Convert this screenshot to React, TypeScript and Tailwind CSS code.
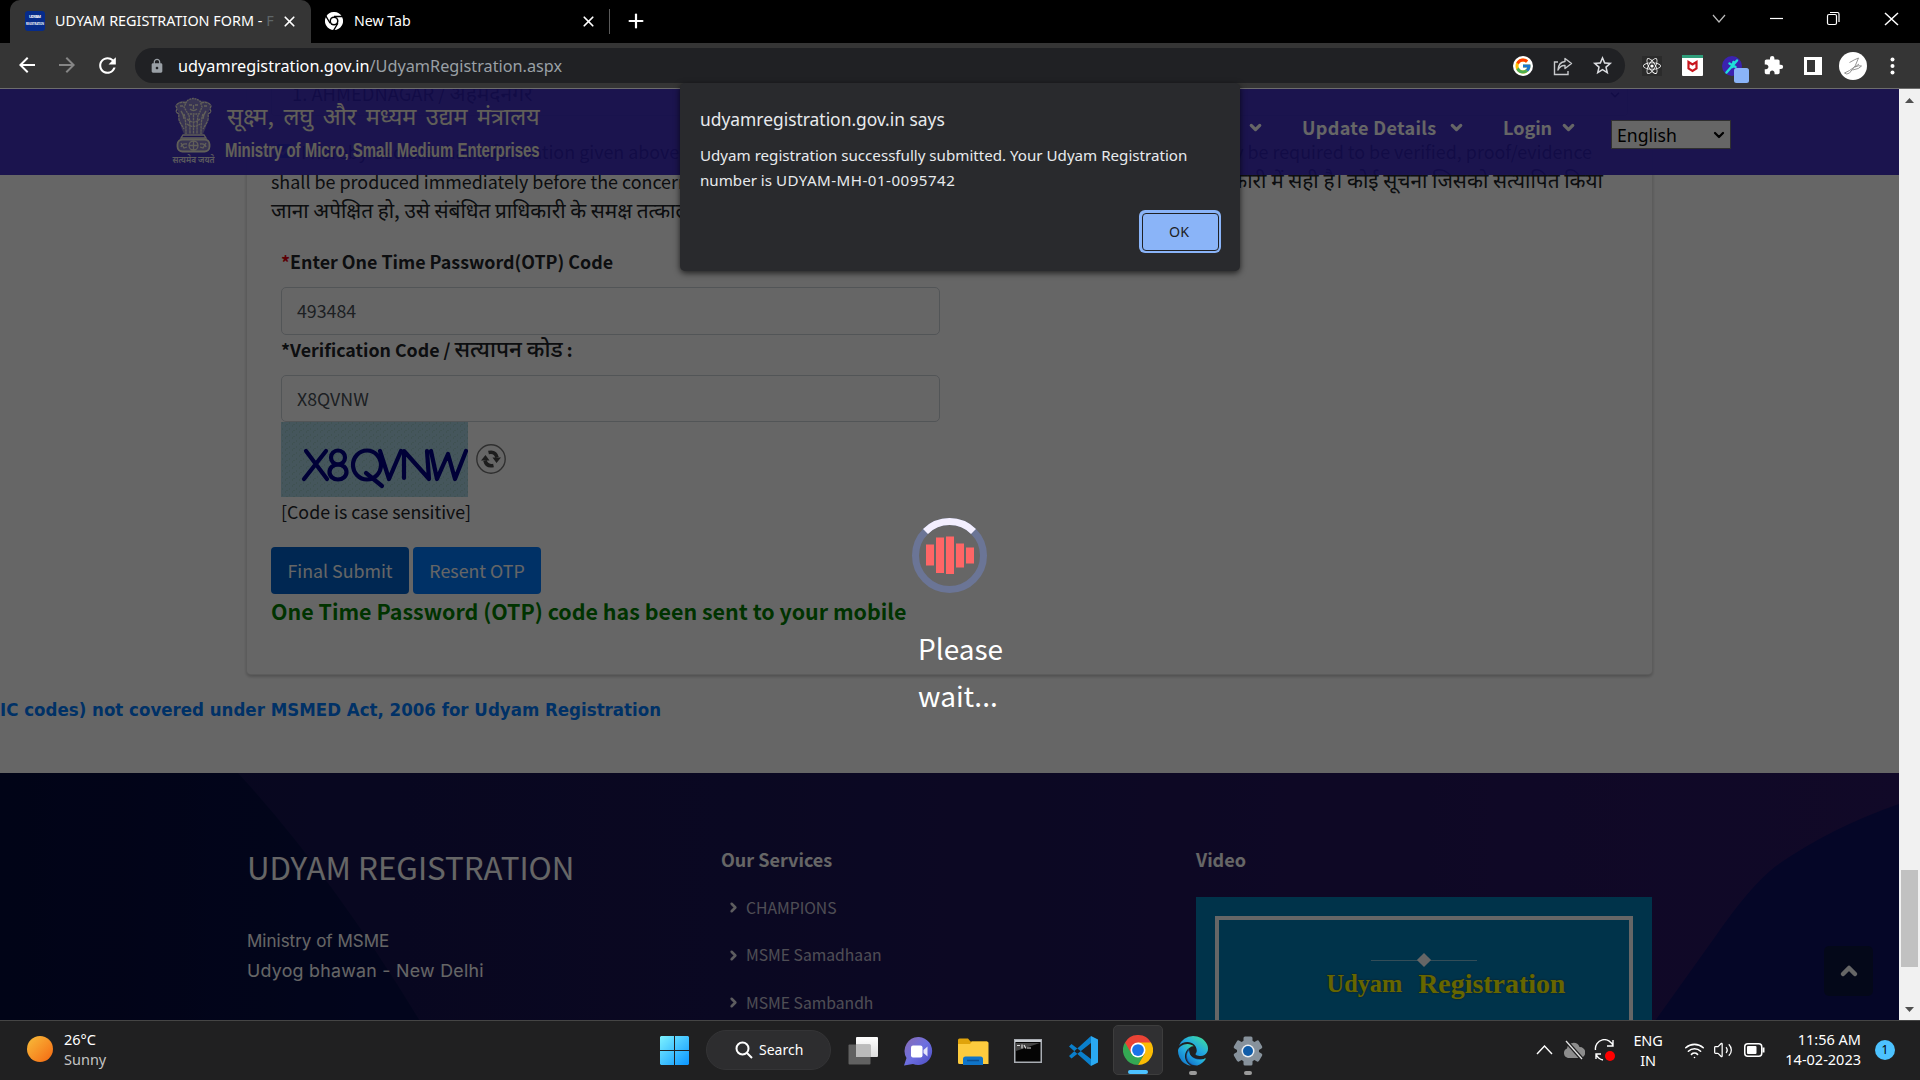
import React, { type ReactNode } from "react";
import { FcGoogle } from "react-icons/fc";
import { FaReact } from "react-icons/fa";
import { BsBrowserEdge } from "react-icons/bs";
import { MdArrowBack, MdArrowForward, MdExtension, MdLock, MdRefresh, MdStarBorder } from "react-icons/md";
import { ChevronDown, ChevronRight, ChevronUp, Plus, Volume2, Wifi, X } from "lucide-react";

function ChromeMark({ size, mono = false }: { size: number; mono?: boolean }) {
  const c = mono ? ["#fff", "#fff", "#fff", "#000", "#fff"] : ["#ea4335", "#34a853", "#fbbc04", "#fff", "#1a73e8"];
  return (
    <svg width={size} height={size} viewBox="0 0 48 48">
      <path d="M24 24 3.2 12A24 24 0 0 1 44.8 12Z" fill={c[0]} />
      <path d="M24 24 3.2 12A24 24 0 0 0 24 48L34.4 30Z" fill={c[1]} />
      <path d="M24 12H44.8A24 24 0 0 1 24 48L34.4 30Z" fill={c[2]} />
      <path d="M3.2 12 13.6 30 24 12H44.8L24 12Z" fill={c[0]} />
      {mono && <path d="M24 12H46M34.4 30 23 49M13.6 30 2.5 11" stroke="#000" strokeWidth="3.5" />}
      <circle cx="24" cy="24" r="12" fill={c[3]} />
      <circle cx="24" cy="24" r={mono ? 8 : 9.4} fill={c[4]} />
    </svg>
  );
}

function TabStrip() {
  return (
    <div className="flex h-[43px] shrink-0 items-start bg-black text-white">
      <div className="ml-[10px] flex h-[42px] w-[301px] items-center rounded-t-[10px] bg-[#353535] pl-[15px] shadow-[0_1px_0_#353535]">
        <svg width="20" height="20" viewBox="0 0 20 20" className="font-bold">
          <rect width="20" height="20" rx="3" fill="#062b8a" />
          <text x="4" y="7" fontSize="4" textLength="12" fill="#fff">UDYAM</text>
          <text x="1" y="14" fontSize="3.500" textLength="18" lengthAdjust="spacingAndGlyphs" fill="#fff">REGISTRATION</text>
        </svg>
        <div className="ml-[10px] w-[220px] overflow-hidden text-[14.4px] leading-[20px] whitespace-nowrap">
          UDYAM REGISTRATION FORM - <span className="text-[#5f6668]">F</span>
        </div>
        <X className="ml-[6px]" size={17} strokeWidth={2.4} />
      </div>
      <div className="flex h-[42px] w-[298px] items-center pl-[14px]">
        <ChromeMark size={18} mono />
        <div className="ml-[11px] flex-1 text-[14.2px] leading-[20px]">New Tab</div>
        <X className="mr-[12px]" size={17} strokeWidth={2.4} />
      </div>
      <div className="mt-[9px] h-[25px] w-px bg-[#5a5a5a]" />
      <Plus className="mt-[10px] ml-[15px]" size={22} strokeWidth={2.4} />
      <div className="ml-auto flex h-[38px] items-center">
        <svg width="200" height="38" viewBox="0 0 200 38" fill="none" stroke="#fff" strokeWidth="1.2" className="mr-[8px]">
          <path d="m1 15 6 7 6-7" stroke="#bbb" />
          <path d="M58 18.5h13" />
          <rect x="115.500" y="14.500" width="9" height="10" rx="1.500" />
          <path d="M118 12.500h7.500q1.500 0 1.500 1.500v8" />
          <path d="m173 13 13 12M186 13l-13 12" strokeWidth="1.500" />
        </svg>
      </div>
    </div>
  );
}

function Toolbar() {
  return (
    <div className="flex h-[46px] shrink-0 items-center border-b border-[#6d6d6d] bg-[#353535] text-white">
      <MdArrowBack className="ml-[15px] -mt-px" size={24} />
      <MdArrowForward className="ml-[16px] -mt-px text-[#868686]" size={24} />
      <MdRefresh className="ml-[16px] -mt-px" size={25} />
      <div className="ml-[15px] flex h-[35px] w-[1490px] items-center rounded-full bg-[#202124] pl-[14px]">
        <MdLock className="text-[#9aa0a6]" size={16} />
        <div className="ml-[13px] text-[16.25px] leading-[24px] whitespace-nowrap">
          udyamregistration.gov.in<span className="text-[#9aa0a6]">/UdyamRegistration.aspx</span>
        </div>
        <div className="ml-auto flex items-center pr-[11px]">
          <span className="flex h-5 w-5 items-center justify-center rounded-full bg-white"><FcGoogle size={18} /></span>
          <svg className="ml-[20px]" width="20" height="20" viewBox="0 0 20 20" fill="none" stroke="#c7c9cc" strokeWidth="1.400">
            <path d="M5 6H1.500v12.500h13.500V15" />
            <path d="M12 2.500 18.500 7.500 12 12.500V9.500Q7.500 9 5 14 5.500 6 12 5.500Z" strokeLinejoin="round" />
          </svg>
          <MdStarBorder className="ml-[18px] text-[#dadce0]" size={23} />
        </div>
      </div>
      <div className="ml-[17px] flex items-center">
        <span className="flex h-5 w-5 items-center justify-center bg-[#2b2b2b]"><FaReact size={18} /></span>
        <svg className="ml-[20px]" width="21" height="21" viewBox="0 0 21 21">
          <rect width="21" height="21" rx="1" fill="#fff" />
          <rect width="21" height="3" fill="#2f9e7b" />
          <path d="M6.500 7v6.500l4 2.500 4-2.500V7l-4 2.500Z" fill="none" stroke="#c8161d" strokeWidth="2.200" />
        </svg>
        <svg className="mt-[7px] ml-[18px]" width="29" height="29" viewBox="0 0 29 29">
          <circle cx="11" cy="11" r="10" fill="#3b22b0" />
          <path d="M5.500 17.500 16 5.500M8.500 8.500l6 3.500M12.500 7l-1 5" stroke="#1fe0d8" strokeWidth="2.500" strokeLinecap="round" />
          <rect x="13" y="13" width="15" height="15" rx="2.500" fill="#8ab4f8" />
        </svg>
        <MdExtension className="ml-[13px]" size={21} />
        <div className="ml-[20px] flex h-[18px] w-[18px] justify-end border-[3px] border-white"><div className="w-[4px] bg-white" /></div>
        <svg className="ml-[17px]" width="28" height="28" viewBox="0 0 28 28">
          <circle cx="14" cy="14" r="14" fill="#fff" />
          <path d="M10.500 10.500q5-3 9-4.500-2 8-9 15-3 2-5 0 5-2 10-6 5-2 7-1-2 3-9 4M16 15l4-3" fill="none" stroke="#888" strokeWidth=".9" />
        </svg>
        <svg className="ml-[23px]" width="5" height="18" viewBox="0 0 5 18" fill="#fff">
          <circle cx="2.500" cy="2.500" r="2" /><circle cx="2.500" cy="9" r="2" /><circle cx="2.500" cy="15.500" r="2" />
        </svg>
      </div>
    </div>
  );
}

function Emblem() {
  return (
    <svg width="43" height="68" viewBox="0 0 43 68">
      <g fill="none" stroke="#f2eedd" strokeWidth="1.300">
        <path d="M15 4q6-5 13 0l2 6-3 7H16l-4-7Z" strokeDasharray="2 .7" />
        <path d="M17 8h3M23 8h3M18 12q3.500 3 7 0M21.500 8v4" />
        <path d="M14 6Q6 4 4 9l1 3-1 3 3 2q-1 6 2 10l3 5M29 6q8-2 10 3l-1 3 1 3-3 2q1 6-2 10l-3 5" strokeDasharray="3 .6" />
        <path d="M8 9h3M32 9h3M9 14q3 4 3 8M34 14q-3 4-3 8" />
        <path d="M12 17q2 5 2 20M31 17q-2 5-2 20M17 18q1 8 1 19M26 18q-1 8-1 19M21.500 18v19M15 22q6.500 6 13 0M15 27q6.500 5 13 0" strokeDasharray="2.500 .6" />
        <path d="M11 38h21l2 3H9Z" />
        <rect x="5.500" y="42.500" width="32" height="12" rx="5" strokeWidth="1.800" />
        <circle cx="21.500" cy="48.500" r="4.500" />
        <path d="M21.500 44v9M17 48.500h9M9 50q1-4 6-3M9 46l3 5 3-1M34 50q-1-4-6-3M34 46l-3 5-3-1" />
      </g>
      <g fill="#f2eedd" opacity=".42">
        <path d="M15 4q6-5 13 0 9-1 11 5l-3 8q0 10-5 20H12Q7 27 7 17L4 9q2-6 11-5Z" />
        <rect x="5" y="42" width="33" height="13" rx="5" />
      </g>
      <text x="0.500" y="66" fontSize="9.500" textLength="42" lengthAdjust="spacingAndGlyphs" fill="#e4e0e8" className="font-['Noto_Sans_Devanagari','Noto_Sans',sans-serif] font-semibold">सत्यमेव जयते</text>
    </svg>
  );
}

function SiteHeader() {
  return (
    <div className="absolute inset-x-0 top-0 flex h-[86px] bg-[rgba(49,30,190,0.9)] text-white">
      <div className="mt-[8px] ml-[172px]"><Emblem /></div>
      <div className="ml-[12px] w-[400px] whitespace-nowrap">
        <div className="mt-[11px] h-[35px] text-[23.5px] leading-[30px] [word-spacing:4.2px] text-[#f2eedd]">सूक्ष्म, लघु और मध्यम उद्यम मंत्रालय</div>
        <div className="-ml-[2px] origin-left scale-x-[0.747] font-['Liberation_Sans',sans-serif] text-[20px] leading-[30px] font-bold text-[#f2eedd]">
          Ministry of Micro, Small Medium Enterprises
        </div>
      </div>
      <div className="ml-auto flex h-[77px] items-center pr-[168px] font-['Noto_Sans_CJK_SC','Noto_Sans',sans-serif] text-[18px] font-bold">
        <ChevronDown size={17} strokeWidth={4.5} className="mr-[38px]" />
        <span className="w-[146px] tracking-[0.35px]">Update Details</span>
        <ChevronDown size={17} strokeWidth={4.5} className="mr-[38px]" />
        <span className="w-[57px]">Login</span>
        <ChevronDown size={17} strokeWidth={4.5} className="mr-[34px]" />
        <div className="mt-[14px] flex h-[29px] w-[120px] items-center border border-[#767676] bg-white pt-px pl-[5px] font-['Noto_Sans',sans-serif] text-[17.6px] font-normal text-black">
          English
          <ChevronDown size={16} strokeWidth={3.4} className="mr-[3px] ml-auto" />
        </div>
      </div>
    </div>
  );
}

function Field({ value, className }: { value: string; className: string }) {
  return <div className={`flex w-[659px] items-center rounded-[5px] border border-[#ced4da] pb-[2px] pl-[15px] text-[17.8px] leading-[28px] text-[#495057] ${className}`}>{value}</div>;
}

function Captcha() {
  return (
    <svg width="187" height="75" viewBox="0 0 187 75">
      <defs>
        <pattern id="noise" width="7" height="6" patternUnits="userSpaceOnUse">
          <rect width="7" height="6" fill="#add8e6" />
          <path d="M1 1h1M4 4h1M6 2v1" stroke="#94c4b8" />
        </pattern>
      </defs>
      <rect width="187" height="75" fill="url(#noise)" />
      <g fill="none" stroke="#00008b" strokeWidth="4.200" strokeLinejoin="round" strokeLinecap="round">
        <path d="M25 29 46 57M45 29 23 57" />
        <ellipse cx="57" cy="35.500" rx="7" ry="7" /><ellipse cx="57" cy="50" rx="8.500" ry="7.500" />
        <ellipse cx="86" cy="43" rx="14" ry="14.500" /><path d="m85 51 16 13" />
        <path d="M99 29 108 57 120 29M123 56 123 29 148 57 146 29M150 29 156 57 167 32 174 57 185 29" />
      </g>
    </svg>
  );
}

function RefreshButton() {
  return (
    <svg className="mt-[22px] ml-[8px]" width="30" height="30" viewBox="0 0 30 30">
      <circle cx="15" cy="15" r="14.2" fill="none" stroke="#777" strokeWidth="1.4" />
      <g fill="none" stroke="#4a4a4a" strokeWidth="3.6">
        <path d="M12.500 8.600Q19.500 7 21 13.500" /><path d="M17.500 21.400Q10.500 23 9 16.500" />
      </g>
      <path d="M16.500 13.500h8.500L20.500 19ZM5 16.500h8.500L9.500 11Z" fill="#4a4a4a" />
    </svg>
  );
}

function FormCard() {
  return (
    <div className="ml-[246px] h-[586px] w-[1407px] rounded-b-[5px] border border-t-0 border-black/10 pl-[24px] text-[18px] text-[#212529] shadow-[0_2px_3px_rgba(0,0,0,0.2)]">
      <div className="flex h-[27px] w-[1357px] justify-between rounded-b-[4px] border border-t-0 border-[#ced4da] pr-[5px] pl-[20px] text-[18.4px] leading-[6px]">
        <span>1. AHMEDNAGAR / <span className="text-[21px]">अहमदनगर</span></span>
        <ChevronDown size={14} strokeWidth={3} className="-mt-px" />
      </div>
      <div className="mt-[20px] w-[1332px] text-[17.9px] leading-[30px] whitespace-nowrap">
        <div className="flex justify-between pr-[11px]">
          <span className="flex items-center">
            <span className="mr-[10px] ml-[6px] flex h-[14px] w-[14px] items-center rounded-[2px] bg-[#0075ff]">
              <svg width="14" height="14" viewBox="0 0 14 14"><path d="m3 7 3 3 5-6" fill="none" stroke="#fff" strokeWidth="2" /></svg>
            </span>
            <span>I hereby declare that information given above</span>
          </span>
          <span>any information that may be required to be verified, proof/evidence</span>
        </div>
        <div className="flex h-[30px] justify-between">
          <span>shall be produced immediately before the concerned</span>
          <span className="-mt-[2px] text-[20.8px]">जानकारी में सही है। कोई सूचना जिसको सत्यापित किया</span>
        </div>
        <div className="h-[30px] text-[20.75px] leading-[26px]">जाना अपेक्षित हो, उसे संबंधित प्राधिकारी के समक्ष तत्काल</div>
      </div>
      <div className="mt-[20px] pl-[10px]">
        <div className="text-[17.85px] leading-[30px] font-bold"><span className="text-red-600">*</span>Enter One Time Password(OTP) Code</div>
        <Field value="493484" className="mt-[11px] h-[48px]" />
        <div className="h-[28px] text-[17.8px] leading-[28px] font-bold">*Verification Code / <span className="text-[22.400px] leading-[20px] font-medium">सत्यापन कोड</span> :</div>
        <Field value="X8QVNW" className="mt-[12px] h-[47px]" />
        <div className="flex">
          <Captcha />
          <RefreshButton />
        </div>
        <div className="text-[17.8px] leading-[28px]">[Code is case sensitive]</div>
      </div>
      <div className="mt-[22px] flex gap-[4px] text-[17.8px] text-white">
        <div className="flex h-[47px] w-[138px] items-center justify-center rounded-[4px] bg-[#0062cc]">Final Submit</div>
        <div className="flex h-[47px] w-[128px] items-center justify-center rounded-[4px] bg-[#007bff]">Resent OTP</div>
      </div>
      <div className="text-[21.43px] leading-[33px] font-bold text-[#008000]">One Time Password (OTP) code has been sent to your mobile</div>
    </div>
  );
}

function FooterLink({ children }: { children: ReactNode }) {
  return <div className="flex h-[47.4px] items-center text-[15.7px] text-white/75"><ChevronRight size={15} strokeWidth={4} className="mr-[5px] ml-[5px] text-white/90" />{children}</div>;
}

function Footer() {
  return (
    <div className="relative mt-[48px] h-[248px] overflow-hidden text-white">
      <svg className="absolute inset-0" width="1899" height="248" viewBox="0 0 1899 248" preserveAspectRatio="none">
        <defs>
          <linearGradient id="f1"><stop offset="0" stopColor="#040b3a" /><stop offset="1" stopColor="#070e48" /></linearGradient>
          <linearGradient id="f2"><stop offset="0" stopColor="#10124c" /><stop offset="1" stopColor="#2c1764" /></linearGradient>
        </defs>
        <rect width="1899" height="248" fill="url(#f2)" />
        <path d="M0 0H238Q330 100 420 248H0Z" fill="url(#f1)" />
        <path d="M1655 248 1715 164Q1750 113 1776 93 1830 55 1899 31V248Z" fill="#0d1062" />
      </svg>
      <div className="relative flex pl-[247px]">
        <div className="w-[474px] pt-[74px] font-['Inter',sans-serif] text-[17px] leading-[30px]">
          <div className="mb-[39px] font-['Noto_Sans_CJK_SC',sans-serif] text-[31.3px] leading-[40px]">UDYAM REGISTRATION</div>
          <div>Ministry of MSME</div>
          <div className="text-[17.8px] tracking-[0.27px]">Udyog bhawan - New Delhi</div>
        </div>
        <div className="w-[475px] pt-[71px]">
          <div className="mb-[10px] text-[18px] leading-[30px] font-bold">Our Services</div>
          <FooterLink>CHAMPIONS</FooterLink>
          <FooterLink>MSME Samadhaan</FooterLink>
          <FooterLink>MSME Sambandh</FooterLink>
        </div>
        <div className="pt-[71px]">
          <div className="mb-[23px] text-[18px] leading-[30px] font-bold">Video</div>
          <div className="h-[150px] w-[456px] bg-[#0080ba] px-[19px] pt-[19px]">
            <div className="flex h-[150px] flex-col items-center border-[4.500px] border-white">
              <div className="mt-[35px] flex items-center"><div className="h-px w-[48px] bg-white/50" /><div className="h-[10px] w-[10px] rotate-45 bg-white" /><div className="h-px w-[48px] bg-white/50" /></div>
              <div className="mt-[2px] flex gap-[16px] pl-[44px] font-['Liberation_Serif',serif] text-[24.300px] leading-[34px] font-bold text-[#ffff00] [text-shadow:0_0_2px_#333]">
                <span>Udyam</span><span className="text-[27.9px]">Registration</span>
              </div>
            </div>
          </div>
        </div>
      </div>
      <div className="absolute top-[173px] left-[1824px] flex h-[50px] w-[49px] items-center justify-center rounded-[5px] bg-[#0a1440]"><ChevronUp size={24} strokeWidth={4.5} /></div>
    </div>
  );
}

function Loader() {
  return (
    <div className="absolute inset-0 bg-black/60 text-white">
      <div className="ml-[911px] pt-[428px]">
        <svg width="77" height="77" viewBox="-38.500 -38.500 77 77">
          <circle r="34" fill="none" stroke="#6b7596" strokeWidth="7" />
          <path d="M-24-24A34 34 0 0 1 24-24" fill="none" stroke="#f3efff" strokeWidth="7" />
          <path d="M-23.500-11h8v21h-8zM-13.500-18h8v35.500h-8zM-3.500-19h8v37.500h-8zM6.500-12h8v24h-8zM16.500-8h8v16h-8z" fill="#ff6666" />
        </svg>
        <div className="mt-[31px] ml-[7px] w-[90px] text-[28px] leading-[47px]"><div>Please</div><div>wait...</div></div>
      </div>
    </div>
  );
}

function Scrollbar() {
  return (
    <div className="flex w-[21px] flex-col items-center bg-[#f1f1f1]">
      <svg className="mt-[9px]" width="9" height="5"><path d="M0 5 4.500 0 9 5z" fill="#505050" /></svg>
      <div className="mt-[767px] h-[97px] w-[17px] bg-[#c1c1c1]" />
      <svg className="mt-[40px]" width="9" height="5"><path d="M0 0 4.500 5 9 0z" fill="#505050" /></svg>
    </div>
  );
}

function AlertDialog() {
  return (
    <div className="absolute top-[83px] left-[680px] h-[188px] w-[560px] rounded-[5px] bg-[#292a2d] px-[20px] pt-[23px] text-[#e8eaed] shadow-[0_2px_6px_rgba(0,0,0,0.7)]">
      <div className="text-[17.4px] leading-[26px]">udyamregistration.gov.in says</div>
      <div className="mt-[11px] text-[15.13px] leading-[25px] whitespace-nowrap">
        Udyam registration successfully submitted. Your Udyam Registration
        <div>number is <span className="tracking-[0.47px]">UDYAM-MH-01-0095742</span></div>
      </div>
      <div className="mt-[17px] ml-[439px] h-[43px] w-[82px] rounded-[6px] bg-[#8ab4f8] p-[2.500px]">
        <div className="flex h-full items-center justify-center rounded-[4px] border-[1.500px] border-[#202124] pr-[2px] text-[14.2px] text-[#202124]">OK</div>
      </div>
    </div>
  );
}

function TaskCell({ children, active, mark }: { children: ReactNode; active?: boolean; mark?: boolean }) {
  return (
    <div className="flex h-[59px] w-[54.95px] items-start justify-center pt-[4px]">
      <div className={`flex h-[50px] w-[50px] flex-col items-center justify-end rounded-[5px] ${active ? "border border-[#3d3d3d] bg-[#303032]" : ""}`}>
        <div className="flex h-[30px] items-center">{children}</div>
        <div className={`mt-[5px] h-[4px] rounded-full ${active ? "w-[20px] bg-[#4cc2ff]" : mark ? "w-[8px] bg-[#9a9a9a]" : "w-[8px]"}`} />
      </div>
    </div>
  );
}

function Taskbar() {
  return (
    <div className="flex h-[60px] shrink-0 items-start border-t border-[#454545] bg-[#202021] text-[14.5px] leading-[20px] text-white">
      <div className="flex w-[660px] items-center pt-[8px] pl-[27px]">
        <div className="h-[26px] w-[26px] rounded-full bg-linear-to-br from-[#f6bd3a] to-[#f3650f]" />
        <div className="ml-[11px]"><div>26°C</div><div className="text-[#c4c4c4]">Sunny</div></div>
      </div>
      <svg className="mt-[15px]" width="29" height="29" viewBox="0 0 29 29">
        <defs><linearGradient id="win" x1="0" y1="0" x2="1" y2="1"><stop stopColor="#7df2ff" /><stop offset="1" stopColor="#0a95ff" /></linearGradient></defs>
        <path d="M1 0h13v14H0V1zM15 0h13l1 1v13H15zM0 15h14v14H1l-1-1zM15 15h14v13l-1 1H15z" fill="url(#win)" />
      </svg>
      <div className="mt-[9px] ml-[17px] flex h-[40px] w-[125px] items-center rounded-full border border-[#343436] bg-[#2d2d2f] pl-[28px] text-[14px]">
        <svg width="18" height="18" viewBox="0 0 18 18" fill="none" stroke="#fff" strokeWidth="2"><circle cx="7.500" cy="7.500" r="6" /><path d="m12 12 5 5" /></svg>
        <span className="ml-[6px]">Search</span>
      </div>
      <div className="ml-[5px] flex">
        <TaskCell>
          <svg width="31" height="28" viewBox="0 0 31 28"><defs><linearGradient id="tv" x1="0" y1="0" x2="0" y2="1"><stop stopColor="#fff" /><stop offset="1" stopColor="#ddd" /></linearGradient></defs><rect x="8" width="22" height="20" rx="1" fill="url(#tv)" /><rect x=".500" y="7.500" width="22" height="20" rx="1" fill="#777" opacity=".75" /><path d="M8 7.500h14.500V20H8z" fill="#bbb" /></svg>
        </TaskCell>
        <TaskCell>
          <svg width="29" height="29" viewBox="0 0 29 29"><defs><linearGradient id="ch" x1="0" y1="0" x2="1" y2="1"><stop stopColor="#8a6bb0" /><stop offset=".5" stopColor="#6d6fe0" /><stop offset="1" stopColor="#4b4bc0" /></linearGradient></defs><path d="M15 0A14 14 0 1 1 9 27L0 28.500 2.500 21A14 14 0 0 1 15 0Z" fill="url(#ch)" /><rect x="7" y="8.500" width="11.500" height="12" rx="2" fill="#fff" /><path d="m19.500 13 4-3.500v10l-4-3.500z" fill="#e6e6fa" /></svg>
        </TaskCell>
        <TaskCell>
          <svg width="31" height="27" viewBox="0 0 31 27"><path d="M0 2q0-1.500 1.500-1.500H10l2.500 3H29V12H0Z" fill="#e0a30b" /><path d="M0 6h12l2-2.500h15q1.500 0 1.500 1.500v21H1.500Q0 26 0 24.500Z" fill="#fdcb3e" /><path d="M5 27v-6q0-2.500 2.500-2.500h15q2.500 0 2.500 2.500v6Z" fill="#0f74c8" /><path d="M9 22.500h12" stroke="#0b4f91" strokeWidth="1.500" /></svg>
        </TaskCell>
        <TaskCell>
          <svg width="28" height="24" viewBox="0 0 28 24"><rect x=".750" y=".750" width="26.500" height="22.500" fill="#050505" stroke="#a9adb3" strokeWidth="1.500" /><path d="M1 2h26" stroke="#c9cdd2" strokeWidth="2" /><path d="M2 4h24L2 12Z" fill="#444" /><path d="M3 6.500h3M8 5.500v4M10 6l2 3.500M13 9h4" stroke="#ddd" strokeWidth="1.200" /></svg>
        </TaskCell>
        <TaskCell>
          <svg width="31" height="30" viewBox="0 0 31 30"><path d="M23 0 30 3.500V26.500L23 30Z" fill="#2aa9f2" /><path d="M23 7 3.500 22.500 1 20 23 0ZM23 23 3.500 8 1 10.500 23 30Z" fill="#0a7fcb" /></svg>
        </TaskCell>
        <TaskCell active><ChromeMark size={30} /></TaskCell>
        <TaskCell mark>
          <svg width="30" height="30" viewBox="0 0 30 30">
            <defs><linearGradient id="edge" x1="0" y1="1" x2="1" y2="0"><stop stopColor="#0c63c4" /><stop offset=".5" stopColor="#23a9e0" /><stop offset=".8" stopColor="#36d0b0" /><stop offset="1" stopColor="#72ea50" /></linearGradient></defs>
            <path d="M11 12Q9 24 27 23 22 30 14 29 4 24 11 12Z" fill="#13509a" />
            <BsBrowserEdge size={30} style={{ fill: "url(#edge)" }} />
          </svg>
        </TaskCell>
        <TaskCell mark>
          <svg width="30" height="30" viewBox="-15 -15 30 30"><g fill="#87929c">{[0, 60, 120].map((a) => <rect key={a} x="-4.500" y="-14.500" width="9" height="29" rx="1.500" transform={`rotate(${a})`} />)}<circle r="11" /></g><circle r="6.500" fill="#e9eef2" /><circle r="5" fill="#0f5ca8" /></svg>
        </TaskCell>
      </div>
      <div className="ml-auto flex h-[58px] items-center pr-[25px]">
        <svg width="17" height="10" viewBox="0 0 17 10" fill="none" stroke="#fff" strokeWidth="1.400"><path d="m1 9 7.500-8L16 9" /></svg>
        <svg className="ml-[10px]" width="22" height="20" viewBox="0 0 22 20"><path d="M5 18a5 5 0 0 1-1-9.500A6.500 6.500 0 0 1 16.500 7 5.500 5.500 0 0 1 17 18Z" fill="#8d8d8d" /><path d="m3 1 16 18" stroke="#202021" strokeWidth="4" /><path d="m3 1 16 18" stroke="#e5e5e5" strokeWidth="1.300" /></svg>
        <svg className="ml-[9px]" width="22" height="22" viewBox="0 0 22 22" fill="none" stroke="#fff" strokeWidth="1.400"><path d="M1.500 11A9 9 0 0 1 19 7M19 1v6h-6M2 20v-5h5M2 15q2 5 7 6" /><circle cx="16" cy="17" r="5" fill="red" stroke="none" /></svg>
        <div className="ml-[16px] w-[32px] text-center tracking-[-0.2px]"><div>ENG</div><div>IN</div></div>
        <Wifi className="ml-[20px]" size={21} strokeWidth={1.8} />
        <Volume2 className="ml-[8px]" size={20} strokeWidth={1.5} />
        <svg className="ml-[11px]" width="21" height="14" viewBox="0 0 21 14"><rect x=".750" y=".750" width="17" height="12.500" rx="3" fill="none" stroke="#fff" strokeWidth="1.500" /><rect x="3" y="3" width="9.500" height="8" rx="1" fill="#fff" /><path d="M19.500 4.500v5" stroke="#fff" strokeWidth="2" /></svg>
        <div className="-mt-[2px] ml-[18px] w-[78px] text-right whitespace-nowrap"><div>11:56 AM</div><div>14-02-2023</div></div>
        <div className="ml-[14px] flex h-[20px] w-[20px] items-center justify-center rounded-full bg-[#4cc2ff] text-[12px] text-black">1</div>
      </div>
    </div>
  );
}

export default function App() {
  return (
    <div className="relative flex h-[1080px] w-[1920px] flex-col overflow-hidden bg-white font-['Noto_Sans','Noto_Sans_Devanagari',sans-serif]">
      <TabStrip />
      <Toolbar />
      <div className="flex h-[931px] shrink-0">
        <div className="relative w-[1899px] overflow-hidden bg-white font-['Noto_Sans_CJK_SC','Noto_Sans_Devanagari','Noto_Sans',sans-serif]">
          <FormCard />
          <div className="mt-[20px] flex h-[30px] w-[661px] justify-end overflow-hidden font-['DejaVu_Sans_Condensed','DejaVu_Sans',sans-serif] text-[18.5px] leading-[30px] font-bold whitespace-nowrap text-[#007bff]">
            (NIC codes) not covered under MSMED Act, 2006 for Udyam Registration
          </div>
          <Footer />
          <SiteHeader />
          <Loader />
        </div>
        <Scrollbar />
      </div>
      <Taskbar />
      <AlertDialog />
    </div>
  );
}
